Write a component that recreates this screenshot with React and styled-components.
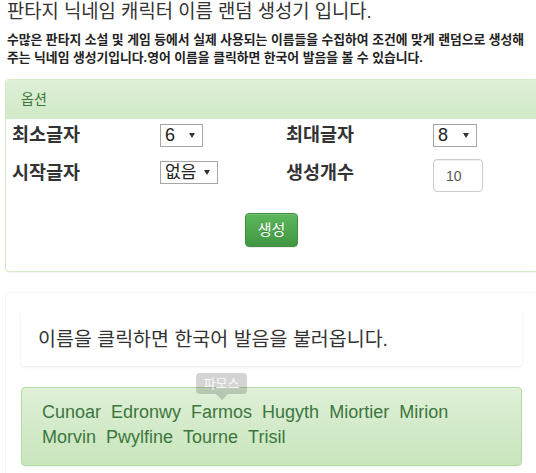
import styled, { createGlobalStyle } from 'styled-components';

const GlobalStyle = createGlobalStyle`
  html, body {
    margin: 0;
    padding: 0;
    background: #fff;
    overflow: hidden;
  }
  body {
    font-family: "Liberation Sans", "Noto Sans CJK KR", sans-serif;
    color: #333;
    font-size: 14px;
  }
`;

const Page = styled.div`
  width: 533px;
  padding: 0 0 0 5px;
`;

const Intro = styled.div`
  padding-left: 2px;
`;

const Title = styled.h1`
  margin: 0;
  font-size: 18.8px;
  line-height: 24px;
  font-weight: normal;
  color: #333;
`;

const Desc = styled.p`
  margin: 7px 0 0;
  width: 529px;
  font-size: 12.8px;
  line-height: 18px;
  font-weight: bold;
  color: #222;
`;

const Panel = styled.section`
  margin-top: 12px;
  border: 1px solid #d6e9c6;
  border-radius: 4px;
  background: #fff;
  box-shadow: 0 1px 2px rgba(0, 0, 0, 0.05);
  overflow: hidden;
`;

const PanelHeading = styled.div`
  padding: 10px 15px;
  line-height: 19px;
  font-size: 14px;
  color: #3c763d;
  background: linear-gradient(to bottom, #dff0d8 0, #d0e9c6 100%);
`;

const PanelBody = styled.div`
  padding: 2px 6px 24px;
`;

const OptionGrid = styled.div`
  display: grid;
  grid-template-columns: 148px 126px 147px 1fr;
  row-gap: 11px;
  align-items: start;
`;

const Label = styled.div`
  font-size: 18.5px;
  font-weight: bold;
  line-height: 27px;
  color: #333;
`;

const SelectBox = styled.div`
  display: flex;
  align-items: center;
  width: ${(p) => p.$w}px;
  height: 23px;
  margin-top: ${(p) => p.$top}px;
  box-sizing: border-box;
  border: 1px solid #a6a6a6;
  background: #fff;
  overflow: hidden;

  & select {
    appearance: none;
    -webkit-appearance: none;
    flex: 1;
    min-width: 0;
    height: 21px;
    border: none;
    outline: none;
    background: transparent;
    padding: 0 0 0 4px;
    margin: 0;
    font-family: "Liberation Sans", "Noto Sans CJK KR", sans-serif;
    font-size: ${(p) => p.$fs}px;
    line-height: 21px;
    color: #222;
  }

  & svg {
    flex: none;
    margin-right: 7px;
  }
`;

const NumberInput = styled.input`
  width: 50px;
  height: 33px;
  box-sizing: border-box;
  padding: 6px 12px;
  border: 1px solid #ccc;
  border-radius: 4px;
  box-shadow: inset 0 1px 1px rgba(0, 0, 0, 0.075);
  font-family: "Liberation Sans", sans-serif;
  font-size: 14px;
  color: #555;
  outline: none;
`;

const ButtonRow = styled.div`
  display: flex;
  justify-content: center;
  margin-top: 21px;
`;

const GenerateButton = styled.button`
  height: 34px;
  padding: 6px 12px;
  border: 1px solid #3e8f3e;
  border-radius: 4px;
  background: linear-gradient(to bottom, #5cb85c 0, #419641 100%);
  color: #fff;
  font-family: "Liberation Sans", "Noto Sans CJK KR", sans-serif;
  font-size: 15px;
  line-height: 20px;
  text-shadow: 0 -1px 0 rgba(0, 0, 0, 0.2);
  box-shadow: inset 0 1px 0 rgba(255, 255, 255, 0.15), 0 1px 1px rgba(0, 0, 0, 0.075);
  cursor: pointer;
`;

const ResultArea = styled.div`
  margin-top: 20px;
  padding: 15px 15px 30px;
  border: 1px solid #f5f5f5;
  border-radius: 4px;
  box-shadow: 0 1px 2px rgba(0, 0, 0, 0.03);
`;

const Notice = styled.div`
  height: 58px;
  box-sizing: border-box;
  display: flex;
  align-items: center;
  padding: 0 17px;
  border-radius: 4px;
  background: #fff;
  box-shadow: 0 1px 3px rgba(0, 0, 0, 0.09);
  font-size: 19.5px;
  color: #333;
`;

const NameAlert = styled.div`
  margin-top: 21px;
  padding: 12px 20px 15px;
  border: 1px solid #b2dba1;
  border-radius: 4px;
  background: linear-gradient(to bottom, #dff0d8 0, #c8e5bc 100%);
  box-shadow: inset 0 1px 0 rgba(255, 255, 255, 0.25), 0 1px 2px rgba(0, 0, 0, 0.05);
  display: flex;
  flex-wrap: wrap;
  column-gap: 10px;
`;

const Name = styled.span`
  position: relative;
  font-size: 18px;
  line-height: 25px;
  color: #3c763d;
  cursor: pointer;
`;

const Tooltip = styled.div`
  position: absolute;
  left: 50%;
  bottom: 100%;
  transform: translateX(-50%);
  display: flex;
  flex-direction: column;
  align-items: center;
  white-space: nowrap;
`;

const TooltipInner = styled.div`
  padding: 3px 8px;
  font-size: 13px;
  line-height: 15px;
  color: rgba(255, 255, 255, 0.9);
  background: rgba(0, 0, 0, 0.17);
  border-radius: 4px;
`;

const TooltipArrow = styled.div`
  width: 0;
  height: 0;
  border-left: 6px solid transparent;
  border-right: 6px solid transparent;
  border-top: 6px solid rgba(0, 0, 0, 0.17);
`;

const Caret = () => (
  <svg width="6" height="5" viewBox="0 0 6 5">
    <polygon points="0,0 6,0 3,5" fill="#333" />
  </svg>
);

const Select = ({ w, top, fs, value, options }) => (
  <SelectBox $w={w} $top={top} $fs={fs}>
    <select defaultValue={value}>
      {options.map((o) => (
        <option key={o} value={o}>{o}</option>
      ))}
    </select>
    <Caret />
  </SelectBox>
);

const lengths = ['2', '3', '4', '5', '6', '7', '8', '9', '10'];
const starts = ['없음', 'A', 'B', 'C', 'D', 'E', 'F', 'G', 'H'];
const names = ['Cunoar', 'Edronwy', 'Farmos', 'Hugyth', 'Miortier', 'Mirion', 'Morvin', 'Pwylfine', 'Tourne', 'Trisil'];

export default function App() {
  return (
    <>
      <GlobalStyle />
      <Page>
        <Intro>
          <Title>판타지 닉네임 캐릭터 이름 랜덤 생성기 입니다.</Title>
          <Desc>
            수많은 판타지 소설 및 게임 등에서 실제 사용되는 이름들을 수집하여 조건에 맞게 랜덤으로 생성해
            주는 닉네임 생성기입니다.영어 이름을 클릭하면 한국어 발음을 볼 수 있습니다.
          </Desc>
        </Intro>

        <Panel>
          <PanelHeading>옵션</PanelHeading>
          <PanelBody>
            <OptionGrid>
              <Label>최소글자</Label>
              <Select w={43} top={3} fs={18} value="6" options={lengths} />
              <Label>최대글자</Label>
              <Select w={44} top={3} fs={18} value="8" options={lengths} />
              <Label>시작글자</Label>
              <Select w={58} top={2} fs={17} value="없음" options={starts} />
              <Label>생성개수</Label>
              <NumberInput defaultValue="10" />
            </OptionGrid>
            <ButtonRow>
              <GenerateButton>생성</GenerateButton>
            </ButtonRow>
          </PanelBody>
        </Panel>

        <ResultArea>
          <Notice>이름을 클릭하면 한국어 발음을 불러옵니다.</Notice>
          <NameAlert>
            {names.map((n) => (
              <Name key={n}>
                {n}
                {n === 'Farmos' && (
                  <Tooltip>
                    <TooltipInner>파모스</TooltipInner>
                    <TooltipArrow />
                  </Tooltip>
                )}
              </Name>
            ))}
          </NameAlert>
        </ResultArea>
      </Page>
    </>
  );
}
